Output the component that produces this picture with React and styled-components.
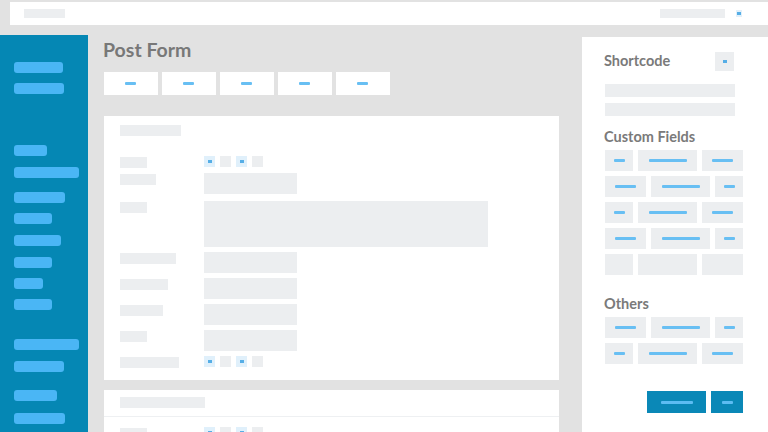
import React from 'react';
import styled, { createGlobalStyle } from 'styled-components';

const GlobalStyle = createGlobalStyle`
  * { box-sizing: border-box; }
  html, body { margin: 0; padding: 0; }
  body {
    background: #e2e2e2;
    font-family: Lato, "Open Sans", sans-serif;
    overflow: hidden;
  }
`;

const sideItems = [
  { w: 49, mt: 27 },
  { w: 50, mt: 10 },
  { w: 33, mt: 51 },
  { w: 65, mt: 11 },
  { w: 51, mt: 14 },
  { w: 38, mt: 10 },
  { w: 47, mt: 11 },
  { w: 38, mt: 11 },
  { w: 29, mt: 10 },
  { w: 38, mt: 10 },
  { w: 65, mt: 29 },
  { w: 50, mt: 11 },
  { w: 43, mt: 18 },
  { w: 51, mt: 12 },
];

const formRows = [
  { label: 27, type: 'check' },
  { label: 36, type: 'input' },
  { label: 27, type: 'area' },
  { label: 56, type: 'input' },
  { label: 48, type: 'input' },
  { label: 43, type: 'input' },
  { label: 27, type: 'input' },
  { label: 59, type: 'check' },
];

const rowA = [
  { w: 28, d: 11 },
  { w: 59, d: 38 },
  { w: 41, d: 21 },
];
const rowB = [
  { w: 41, d: 21 },
  { w: 59, d: 38 },
  { w: 28, d: 11 },
];

const Checks = () => (
  <CheckGroup>
    <Check $on><Dot /></Check>
    <Check />
    <Check $on><Dot /></Check>
    <Check />
  </CheckGroup>
);

const FieldRow = ({ items, empty }) => (
  <FieldLine>
    {items.map((it, i) => (
      <FieldBox key={i} $w={it.w}>
        {!empty && <Dash $w={it.d} />}
      </FieldBox>
    ))}
  </FieldLine>
);

const App = () => {
  return (
    <Page>
      <GlobalStyle />
      <TopBar>
        <Pill $w={41} />
        <TopRight>
          <Pill $w={65} />
          <TopIcon><Dot /></TopIcon>
        </TopRight>
      </TopBar>
      <Body>
        <Sidebar>
          {sideItems.map((s, i) => (
            <SideItem key={i} $w={s.w} $mt={s.mt} />
          ))}
        </Sidebar>
        <Main>
          <Title>Post Form</Title>
          <Tabs>
            {[0, 1, 2, 3, 4].map((i) => (
              <Tab key={i}><Dash $w={11} /></Tab>
            ))}
          </Tabs>
          <Card>
            <CardHead>
              <Pill $w={61} $h={11} />
            </CardHead>
            <Form>
              {formRows.map((r, i) => (
                <FormRow key={i} $area={r.type === 'area'}>
                  <Label $w={r.label} />
                  {r.type === 'check' && <Checks />}
                  {r.type === 'input' && <Input />}
                  {r.type === 'area' && <TextArea />}
                </FormRow>
              ))}
            </Form>
          </Card>
          <Card $second>
            <CardHeadLine>
              <Pill $w={85} $h={11} />
            </CardHeadLine>
            <Form $tight>
              <FormRow>
                <Label $w={27} />
                <Checks />
              </FormRow>
            </Form>
          </Card>
        </Main>
        <Panel>
          <PanelHead>
            <PanelTitle>Shortcode</PanelTitle>
            <SmallBox><Dot /></SmallBox>
          </PanelHead>
          <CodeBar $mt={13} />
          <CodeBar $mt={6} />
          <PanelTitle $mt={11}>Custom Fields</PanelTitle>
          <FieldGrid>
            <FieldRow items={rowA} />
            <FieldRow items={rowB} />
            <FieldRow items={rowA} />
            <FieldRow items={rowB} />
            <FieldRow items={rowA} empty />
          </FieldGrid>
          <PanelTitle $mt={19}>Others</PanelTitle>
          <FieldGrid>
            <FieldRow items={rowB} />
            <FieldRow items={rowA} />
          </FieldGrid>
          <Actions>
            <Button $w={59}><Dash $w={32} $light /></Button>
            <Button $w={32}><Dash $w={11} $light /></Button>
          </Actions>
        </Panel>
      </Body>
    </Page>
  );
};

export default App;

const Page = styled.div`
  width: 768px;
  height: 432px;
  overflow: hidden;
  background: #e2e2e2;
`;

const TopBar = styled.div`
  margin: 2px 0 0 10px;
  height: 23px;
  background: #ffffff;
  display: flex;
  align-items: center;
  justify-content: space-between;
  padding: 0 26px 0 14px;
`;

const TopRight = styled.div`
  display: flex;
  align-items: center;
  gap: 11px;
`;

const Pill = styled.div`
  width: ${(p) => p.$w}px;
  height: ${(p) => p.$h || 9}px;
  background: #eceef0;
`;

const TopIcon = styled.div`
  width: 6px;
  height: 7px;
  background: #e2f0fa;
  display: flex;
  align-items: center;
  justify-content: center;
`;

const Dot = styled.div`
  width: 4px;
  height: 3px;
  background: #56aee6;
`;

const Body = styled.div`
  display: flex;
  margin-top: 10px;
  height: 397px;
`;

const Sidebar = styled.div`
  width: 88px;
  flex-shrink: 0;
  background: #0587b4;
  padding-left: 14px;
  display: flex;
  flex-direction: column;
`;

const SideItem = styled.div`
  width: ${(p) => p.$w}px;
  height: 11px;
  margin-top: ${(p) => p.$mt}px;
  border-radius: 3px;
  background: #4ab6f5;
  flex-shrink: 0;
`;

const Main = styled.div`
  width: 494px;
  flex-shrink: 0;
  padding: 3px 0 0 16px;
  display: flex;
  flex-direction: column;
`;

const Title = styled.div`
  font-size: 19.5px;
  line-height: 24px;
  font-weight: 700;
  color: #787878;
  margin-left: -1px;
`;

const Tabs = styled.div`
  display: flex;
  gap: 4.5px;
  margin-top: 10px;
`;

const Tab = styled.div`
  width: 53.5px;
  height: 23px;
  background: #ffffff;
  display: flex;
  align-items: center;
  justify-content: center;
`;

const Dash = styled.div`
  width: ${(p) => p.$w}px;
  height: 3px;
  border-radius: 1px;
  background: ${(p) => (p.$light ? '#5cbcf2' : '#68bff3')};
`;

const Card = styled.div`
  width: 455px;
  background: #ffffff;
  margin-top: ${(p) => (p.$second ? 10 : 21)}px;
  flex-shrink: 0;
  padding-bottom: ${(p) => (p.$second ? 0 : 12)}px;
`;

const CardHead = styled.div`
  padding: 9px 16px 0;
`;

const CardHeadLine = styled.div`
  padding: 7px 16px 0;
  height: 27px;
  border-bottom: 1px solid #eef0f2;
`;

const Form = styled.div`
  padding: ${(p) => (p.$tight ? 10 : 20)}px 16px 0;
  display: flex;
  flex-direction: column;
  gap: 5px;
`;

const FormRow = styled.div`
  display: flex;
  align-items: flex-start;
  margin-top: ${(p) => (p.$area ? 2 : 0)}px;
`;

const Label = styled.div`
  width: ${(p) => p.$w}px;
  height: 11px;
  margin-top: 1px;
  margin-right: ${(p) => 84 - p.$w}px;
  background: #eceef0;
`;

const CheckGroup = styled.div`
  display: flex;
  gap: 5px;
`;

const Check = styled.div`
  width: 11px;
  height: 11px;
  background: ${(p) => (p.$on ? '#e0f0fb' : '#eceef0')};
  display: flex;
  align-items: center;
  justify-content: center;
`;

const Input = styled.div`
  width: 93px;
  height: 21px;
  background: #eceef0;
`;

const TextArea = styled.div`
  width: 284px;
  height: 46px;
  background: #eceef0;
`;

const Panel = styled.div`
  flex: 1;
  margin-top: 2px;
  background: #ffffff;
  padding: 14px 25px 0 22px;
  display: flex;
  flex-direction: column;
`;

const PanelHead = styled.div`
  display: flex;
  align-items: center;
  justify-content: space-between;
  padding-right: 9px;
`;

const PanelTitle = styled.div`
  font-size: 14.5px;
  line-height: 20px;
  font-weight: 700;
  color: #7a7a7a;
  margin-top: ${(p) => p.$mt || 0}px;
`;

const SmallBox = styled.div`
  width: 19px;
  height: 19px;
  background: #eceef0;
  display: flex;
  align-items: center;
  justify-content: center;
`;

const CodeBar = styled.div`
  width: 130px;
  height: 13px;
  margin: ${(p) => p.$mt}px 0 0 1px;
  background: #eceef0;
`;

const FieldGrid = styled.div`
  display: flex;
  flex-direction: column;
  gap: 5px;
  margin-top: 3px;
`;

const FieldLine = styled.div`
  display: flex;
  gap: 5px;
  padding-left: 1px;
`;

const FieldBox = styled.div`
  width: ${(p) => p.$w}px;
  height: 21px;
  background: #eceef0;
  display: flex;
  align-items: center;
  justify-content: center;
`;

const Actions = styled.div`
  display: flex;
  justify-content: flex-end;
  gap: 5px;
  margin-top: 27px;
`;

const Button = styled.div`
  width: ${(p) => p.$w}px;
  height: 22px;
  background: #0a88b7;
  display: flex;
  align-items: center;
  justify-content: center;
`;
